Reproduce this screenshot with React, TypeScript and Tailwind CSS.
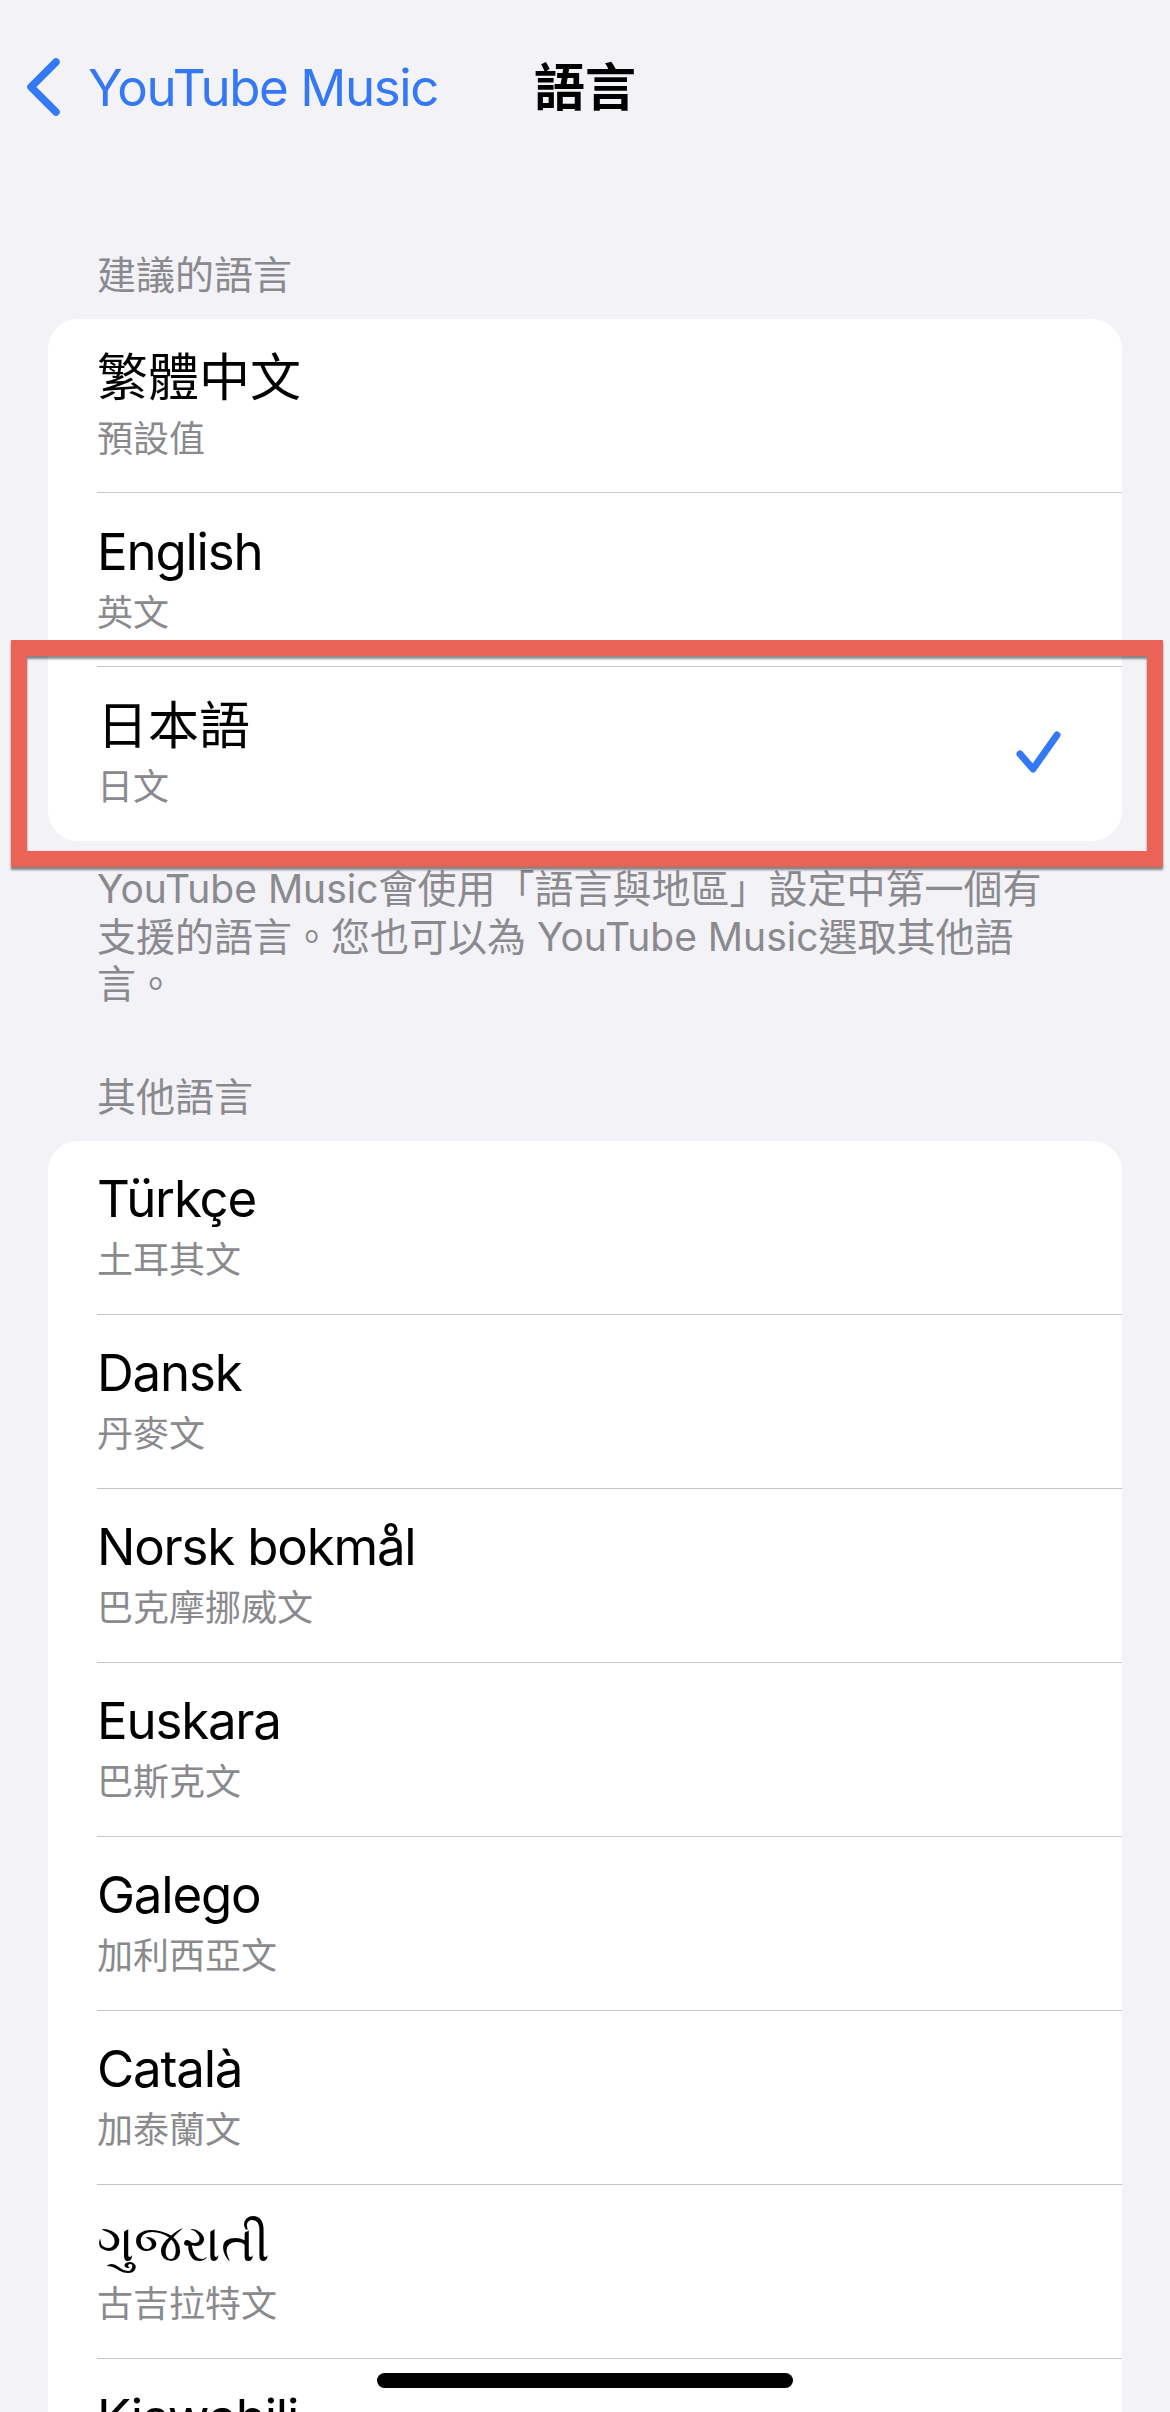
import React from "react";

type Lang = { name: string; sub: string; checked?: boolean };

const suggested: Lang[] = [
  { name: "繁體中文", sub: "預設值" },
  { name: "English", sub: "英文" },
  { name: "日本語", sub: "日文", checked: true },
];

const others: Lang[] = [
  { name: "Türkçe", sub: "土耳其文" },
  { name: "Dansk", sub: "丹麥文" },
  { name: "Norsk bokmål", sub: "巴克摩挪威文" },
  { name: "Euskara", sub: "巴斯克文" },
  { name: "Galego", sub: "加利西亞文" },
  { name: "Català", sub: "加泰蘭文" },
  { name: "ગુજરાતી", sub: "古吉拉特文" },
  { name: "Kiswahili", sub: "斯瓦希里文" },
];

// latin names are set a little tighter, Inter runs wider than the iOS font
const isLatin = (s: string) => /^[\u0000-\u024f\s]+$/.test(s);

// blue check on the selected language
const Check = () => (
  <svg width="50" height="50" viewBox="0 0 50 50" fill="none">
    <path
      d="M4 25 L17 40 L41 6"
      stroke="#3478f6"
      strokeWidth="7"
      strokeLinecap="round"
      strokeLinejoin="round"
    />
  </svg>
);

const Row = ({ lang, last }: { lang: Lang; last: boolean }) => (
  <div className="pl-[49px]">
    <div
      className={
        "h-[174px] flex items-center justify-between pr-[56px] " +
        (last ? "" : "border-b border-[#c6c6c8]")
      }
    >
      <div className="flex flex-col">
        <span
          className={
            "text-[51px] leading-[66px] text-black " +
            (isLatin(lang.name) ? "tracking-[-1.2px]" : "")
          }
        >
          {lang.name}
        </span>
        <span className="text-[36px] leading-[56px] text-[#8a8a8e]">{lang.sub}</span>
      </div>
      {lang.checked && <Check />}
    </div>
  </div>
);

const SectionHeader = ({ title }: { title: string }) => (
  <div className="px-[97px] text-[39px] leading-[47px] text-[#8a8a8e]">{title}</div>
);

export default function App() {
  return (
    <div className="relative h-[2412px] overflow-hidden bg-[#f2f2f7] font-['Inter','Noto_Sans_CJK_TC','Noto_Sans',sans-serif]">
      {/* nav bar */}
      <div className="grid h-[174px] grid-cols-[1fr_auto_1fr] items-center">
        <div className="flex items-center gap-[26px] pl-[26px] text-[#3478f6]">
          <svg width="36" height="58" viewBox="0 0 36 58" fill="none">
            <path
              d="M30 4 L5 29 L30 54"
              stroke="#3478f6"
              strokeWidth="7.5"
              strokeLinecap="round"
              strokeLinejoin="round"
            />
          </svg>
          <span className="text-[51px] leading-none tracking-[-1.4px]">YouTube Music</span>
        </div>
        <div className="text-[51px] font-bold leading-none text-black">語言</div>
        <div />
      </div>

      <div className="pt-[77px]">
        <SectionHeader title="建議的語言" />
        <div className="mx-[48px] mt-[21px] overflow-hidden rounded-[30px] bg-white">
          {suggested.map((l, i) => (
            <Row key={l.name} lang={l} last={i === suggested.length - 1} />
          ))}
        </div>

        <div className="px-[97px] pt-[24px] text-[39px] leading-[47.5px] text-[#8a8a8e] whitespace-nowrap">
          <div>YouTube Music會使用「語言與地區」設定中第一個有</div>
          <div>支援的語言。您也可以為 YouTube Music選取其他語</div>
          <div>言。</div>
        </div>

        <div className="pt-[65px]">
          <SectionHeader title="其他語言" />
        </div>
        <div className="mx-[48px] mt-[21px] overflow-hidden rounded-[30px] bg-white">
          {others.map((l, i) => (
            <Row key={l.name} lang={l} last={i === others.length - 1} />
          ))}
        </div>
      </div>

      {/* red highlight frame */}
      <div className="absolute left-[11px] top-[640px] h-[227px] w-[1152px] border-[16px] border-[#ea6354] drop-shadow-[0_3px_1px_rgba(0,0,0,0.45)]" />

      {/* home indicator */}
      <div className="absolute bottom-[24px] left-[377px] h-[15px] w-[416px] rounded-full bg-black" />
    </div>
  );
}
